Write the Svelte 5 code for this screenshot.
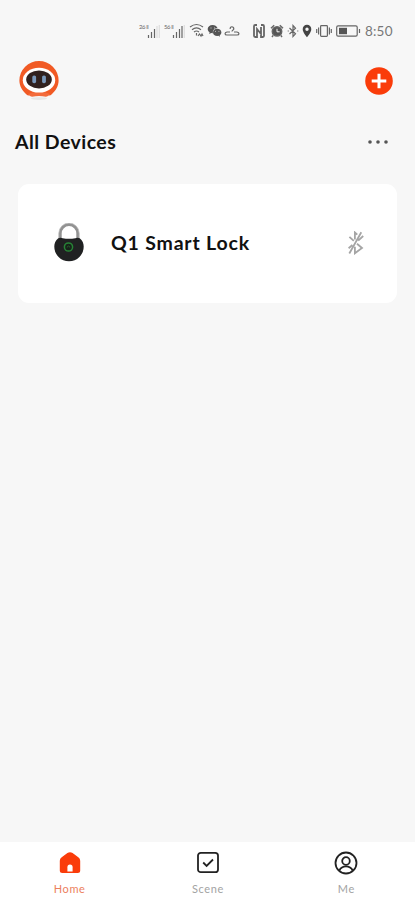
<script lang="ts">
	let title = "All Devices";
	let time = "8:50";

	let devices = [{ name: "Q1 Smart Lock" }];

	let tabs = [
		{ id: "home", label: "Home" },
		{ id: "scene", label: "Scene" },
		{ id: "me", label: "Me" },
	];
	let activeTab = "home";
	let networks = ["26", "56"];
</script>

<div class="screen">
	<div class="status">
		{#each networks as network, i}
			<div class="network">
				<span>{network} ll</span>
				<svg width="13" height="13" viewBox="0 0 13 13">
					<path d="M1.5 10v3M4.5 7v6M7.5 4v9" />
					<path class:weak={i === 0} d="M10 1v12" />
					<path class="weak" d="M12.3 0v13" />
				</svg>
			</div>
		{/each}
		<svg class="wifi" width="16" height="16" viewBox="0 0 16 16">
			<path d="M1 4q6.5-5 13 0M3 6.7q4.5-3.5 9 0M5 9q2.5-2 5 0M7.5 10v2.5M9 13l1.5-2 1.5 2 1-2 1 2" />
		</svg>
		<svg class="wechat" width="15" height="14" viewBox="0 0 15 14">
			<path d="M5.6 1C2.7 1 .7 2.8.7 5c0 1.4.7 2.5 1.9 3.3L2.2 10l2-1 1.7.2C5.5 6.2 7.7 4.1 10.5 4 9.7 2.2 7.9 1 5.6 1Z" />
			<path d="M10.2 4.8c-2.4 0-4.2 1.6-4.2 3.6s1.8 3.5 4.2 3.5l1.2-.1 1.6.9-.3-1.5c1-.7 1.7-1.7 1.7-2.8 0-2-1.8-3.6-4.2-3.6Z" />
			<path class="eyes" d="M3.5 4h1M7 4h1M8.2 7.4h.8M11.5 7.4h.8" />
		</svg>
		<svg class="dish" width="16" height="14" viewBox="0 0 16 14">
			<path d="M6.2 5c-.5-3 3.6-3 3.6 0 0 1-1.8 1-1.8 2.5M6 8H3c-2.6.4-2.6 3 0 3h10c2.6 0 2.6-2.6 0-3h-3" />
		</svg>
		<svg class="nfc" width="12" height="14" viewBox="0 0 12 14">
			<path d="M4 1H2.2Q1 1 1 2.2v9.6Q1 13 2.2 13H4V5l4 5V3M8 1h1.8Q11 1 11 2.2v9.6q0 1.2-1.2 1.2H8v-2" />
		</svg>
		<svg class="alarm" width="14" height="14" viewBox="0 0 14 14">
			<circle cx="7" cy="7.4" r="4.7" />
			<path d="M1 4.2 4.2 1.3M13 4.2 9.8 1.3M3.2 11.4 2 13M10.8 11.4 12 13" />
			<path class="hands" d="M7 4.8v3h2.6" />
		</svg>
		<svg class="bt" width="12" height="14" viewBox="0 0 12 14">
			<path d="m2.5 4 6 5.8L6 12.5v-11l2.5 2.7-6 5.8M.7 7h1.1M10.2 7h1.1" />
		</svg>
		<svg class="pin" width="10" height="14" viewBox="0 0 10 14">
			<path d="M5 .8a4.3 4.3 0 0 0-4.3 4.4C.7 8.4 5 13.2 5 13.2s4.3-4.8 4.3-8A4.3 4.3 0 0 0 5 .8Zm0 2.7a1.7 1.7 0 1 1 0 3.4 1.7 1.7 0 0 1 0-3.4Z" />
		</svg>
		<svg class="vibrate" width="16" height="14" viewBox="0 0 16 14">
			<rect x="4.6" y="1.7" width="6.8" height="10.6" rx=".8" />
			<path d="M2.6 3.5v7M.7 5v4M13.4 3.5v7M15.3 5v4" />
		</svg>
		<svg class="battery" width="25" height="14" viewBox="0 0 25 14">
			<rect x=".7" y="1.8" width="20.5" height="10.4" rx="1.4" />
			<path class="charge" d="M3 3.8h8v6.4H3z" />
			<path d="M23.5 5v4" />
		</svg>
		<time>{time}</time>
	</div>

	<header>
		<svg class="avatar" width="42" height="42" viewBox="0 0 42 42">
			<ellipse cx="21" cy="38.6" rx="8" ry="1.4" fill="#e7e7e7" />
			<path d="M8.5 34.5C4.4 31 1.4 26 1.4 20.5a19.6 19.6 0 0 1 39.2 0c0 5.5-3 10.5-7.1 14q-1.3 1.2-2.8.8-9.7-3-19.4 0-1.5.4-2.8-.8Z" fill="#f15a24" />
			<path d="M10 34q11-5 22 0-2 2.7-4 2.8-7-1.6-14 0-2-.1-4-2.8Z" fill="#f36b3b" />
			<ellipse cx="21" cy="20.2" rx="16.2" ry="12.4" fill="#fff" />
			<ellipse cx="21" cy="19.4" rx="12.8" ry="9" fill="#30211f" />
			<rect x="14.3" y="15.4" width="3.8" height="7.8" rx="1.7" fill="#7998bb" />
			<rect x="24.1" y="15.4" width="3.8" height="7.8" rx="1.7" fill="#7998bb" />
		</svg>
		<button class="add" aria-label="Add device">
			<svg width="28" height="28" viewBox="0 0 28 28">
				<circle cx="14" cy="14" r="13.8" fill="#fa3c0a" />
				<path d="M14 6.7v14.6M6.7 14h14.6" stroke="#fff" stroke-width="3" />
			</svg>
		</button>
	</header>

	<div class="heading">
		<h1>{title}</h1>
		<button aria-label="More">
			<svg width="22" height="6" viewBox="0 0 22 6" fill="#555">
				<circle cx="3" cy="3" r="1.8" />
				<circle cx="11" cy="3" r="1.8" />
				<circle cx="19" cy="3" r="1.8" />
			</svg>
		</button>
	</div>

	<main>
		{#each devices as device}
			<article>
				<svg width="30" height="39" viewBox="0 0 30 39">
					<path d="M6.2 18v-7.7a8.8 8.8 0 0 1 17.6 0V18" fill="none" stroke="#929292" stroke-width="3" />
					<path d="M4.8 18v-7.7a10.2 10.2 0 0 1 20.4 0V18" fill="none" stroke="#c0c0c0" stroke-width=".7" />
					<path d="M4.3 15.3q2.2-1 4.4 0 6.3 1 12.6 0 2.2-1 4.4 0c2.8 2.1 4 5 4 8.3a14.7 14.7 0 0 1-29.4 0c0-3.3 1.2-6.2 4-8.3Z" fill="#202122" />
					<circle cx="14.5" cy="24" r="4.1" fill="#172119" stroke="#278336" stroke-width="1.5" />
					<path d="M13.2 24.5c0-2 2.6-2 2.6 0" fill="none" stroke="#27622f" />
				</svg>
				<h2>{device.name}</h2>
				<svg class="offline" width="18" height="24" viewBox="0 0 18 24">
					<path d="M2.3 22.5 14.3 1.2M7.9 8.5V1.5l2.4 2.2M2.4 5.8l4.4 4M10 12.8l5 4.2-7.1 5.3v-6.5M16.2 5l-5 4.7M5.4 14 1.6 17.2" />
				</svg>
			</article>
		{/each}
	</main>

	<nav>
		{#each tabs as tab}
			<button class:active={tab.id === activeTab} on:click={() => (activeTab = tab.id)}>
				<svg width="24" height="24" viewBox="0 0 24 24">
					{#if tab.id === "home"}
						<path d="M9.4 2q2.6-1.6 5.2 0l5.7 4.2q1.9 1.4 1.9 3.6v9.7q0 2.5-2.5 2.5H4.3q-2.5 0-2.5-2.5V9.8q0-2.2 1.9-3.6Z" fill="currentColor" />
						<path d="M9.4 20.4v-4.2a2.6 2.6 0 0 1 5.2 0v4.2Z" fill="#fff" />
					{:else if tab.id === "scene"}
						<rect x="2" y="1.8" width="20" height="19.4" rx="2.8" />
						<path d="m7.2 11.5 3.4 3.4 6.4-6.4" />
					{:else}
						<circle cx="12" cy="12" r="10.5" />
						<circle cx="12" cy="10" r="3.8" />
						<path d="M5.3 19.5c2.7-5.4 10.7-5.4 13.4 0" />
					{/if}
				</svg>
				<span>{tab.label}</span>
			</button>
		{/each}
	</nav>
</div>

<style>
	:global(body) {
		background: #f7f7f7;
	}

	.screen {
		display: flex;
		flex-direction: column;
		height: 900px;
		background: #f7f7f7;
		color: #111;
		font-family: Lato, "Open Sans", sans-serif;
	}

	svg {
		display: block;
		flex-shrink: 0;
	}

	button {
		display: block;
		padding: 0;
		border: 0;
		background: none;
		color: inherit;
		font: inherit;
	}

	h1,
	h2 {
		margin: 0;
		font-size: 19.5px;
		font-weight: 700;
		line-height: 26px;
		letter-spacing: 0.45px;
		white-space: nowrap;
	}

	.status {
		display: flex;
		align-items: center;
		height: 30px;
		padding: 16px 22px 0 139px;
		color: #666;
	}

	.status svg {
		fill: none;
		stroke: currentColor;
		stroke-width: 1.2;
	}

	.network {
		display: flex;
		width: 21px;
		height: 14px;
		margin-right: 4px;
	}

	.network span {
		width: 8px;
		font-size: 6px;
		line-height: 6px;
		letter-spacing: -0.4px;
		white-space: nowrap;
	}

	.network svg {
		margin-top: 1px;
	}

	.status .weak {
		stroke: #ddd;
	}

	.status .wechat {
		margin-left: 2px;
		fill: #555;
		stroke: none;
	}

	.status .eyes {
		stroke: #eee;
		stroke-width: 0.8;
	}

	.dish {
		margin-left: 2px;
	}

	.status .nfc {
		margin-left: 13px;
		stroke-width: 1.8;
	}

	.status .alarm {
		margin-left: 5px;
		fill: #555;
		stroke-width: 1.5;
	}

	.status .hands {
		fill: none;
		stroke: #f7f7f7;
		stroke-width: 1;
	}

	.bt {
		margin-left: 3px;
	}

	.status .pin {
		margin-left: 3px;
		fill: #444;
		stroke: none;
	}

	.vibrate {
		margin-left: 4px;
	}

	.battery {
		margin-left: 4px;
	}

	.status .charge {
		fill: #555;
		stroke: none;
	}

	time {
		margin-left: 4px;
		font-size: 13.5px;
		line-height: 16px;
		letter-spacing: 0.2px;
		color: #777;
	}

	header {
		display: flex;
		align-items: center;
		justify-content: space-between;
		height: 70px;
		padding: 0 22px 0 17.5px;
	}

	.heading {
		display: flex;
		align-items: center;
		justify-content: space-between;
		height: 52px;
		padding: 0 26px 0 15px;
	}

	main {
		flex: 1;
		padding: 16px 18px 0;
	}

	article {
		display: flex;
		align-items: center;
		box-sizing: border-box;
		height: 119px;
		padding: 0 32px 2px 36px;
		border-radius: 11px;
		background: #fff;
	}

	article h2 {
		flex: 1;
		margin-left: 27px;
		letter-spacing: 0.8px;
	}

	.offline {
		fill: none;
		stroke: #a5a5a5;
		stroke-width: 1.8;
	}

	nav {
		display: grid;
		grid-template-columns: repeat(3, 1fr);
		height: 58px;
		background: #fff;
	}

	nav button {
		display: flex;
		flex-direction: column;
		align-items: center;
		gap: 7px;
		padding: 9px 0 0 1px;
		color: #222;
	}

	nav svg {
		fill: none;
		stroke: currentColor;
		stroke-width: 1.8;
	}

	nav span {
		font-size: 11px;
		line-height: 14px;
		letter-spacing: 0.6px;
		color: #a3a3a3;
	}

	nav .active {
		color: #fa3c0a;
	}

	nav .active svg {
		stroke: none;
	}

	nav .active span {
		color: #ec7f5e;
	}
</style>
